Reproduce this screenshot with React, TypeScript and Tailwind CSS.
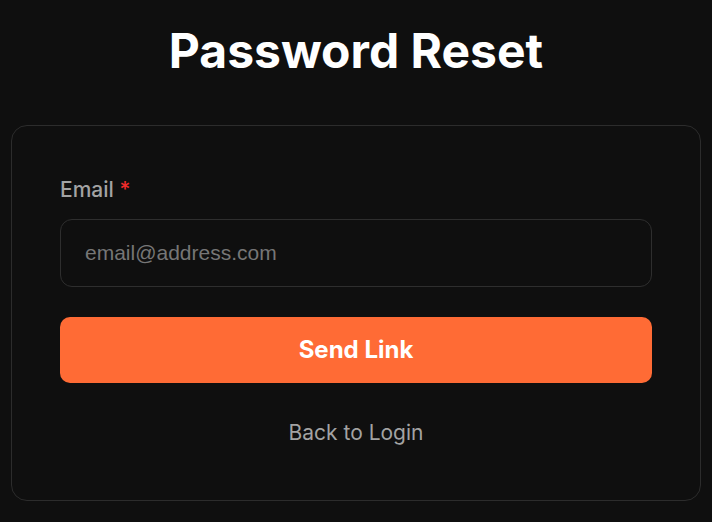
export default function App() {
  return (
    <div className="min-h-screen bg-[#0f0f0f] px-[11px] font-['Inter','Noto_Sans',sans-serif]">
      {/* heading */}
      <h1 className="pt-[27px] mb-[50px] text-center text-[48px] leading-none font-bold text-white">
        Password Reset
      </h1>

      {/* card */}
      <div className="rounded-2xl border border-[#2c2c2c] bg-[#0f0f0f] px-12 pt-12 pb-[53px]">
        <label className="block text-[21px] leading-8 font-medium text-[#a3a3a3] mb-[13px]">
          Email <span className="text-[#ef2b2b]">*</span>
        </label>
        <input
          type="email"
          placeholder="email@address.com"
          className="block w-full h-[68px] rounded-xl border border-[#2e2e2e] bg-transparent px-6 text-[21px] text-white placeholder:text-[#767676] outline-none font-['Liberation_Sans',Arial,sans-serif]"
        />
        <button className="mt-[30px] w-full h-[66px] rounded-[10px] bg-[#ff6b35] text-[24px] font-bold text-white">
          Send Link
        </button>
        <div className="mt-9 h-7 flex items-center justify-center text-[21px] leading-7 text-[#a3a3a3]">
          Back to Login
        </div>
      </div>
    </div>
  );
}
